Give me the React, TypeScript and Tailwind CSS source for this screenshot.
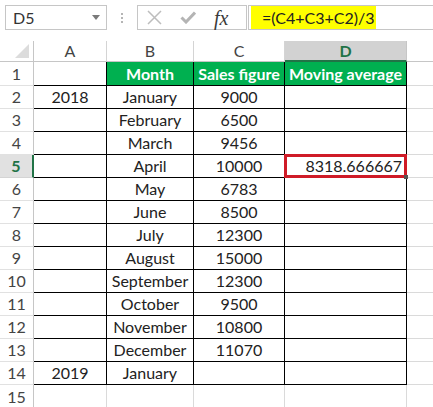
import React from "react";

const rows: string[][] = [
  ["", "Month", "Sales figure", "Moving average"],
  ["2018", "January", "9000", ""],
  ["", "February", "6500", ""],
  ["", "March", "9456", ""],
  ["", "April", "10000", "8318.666667"],
  ["", "May", "6783", ""],
  ["", "June", "8500", ""],
  ["", "July", "12300", ""],
  ["", "August", "15000", ""],
  ["", "September", "12300", ""],
  ["", "October", "9500", ""],
  ["", "November", "10800", ""],
  ["", "December", "11070", ""],
  ["2019", "January", "", ""],
];

function Toolbar() {
  return (
    <div className="flex h-[41px] items-start pt-[5px] pl-[5px]">
      {/* Name box */}
      <div className="flex h-[25px] w-[102px] items-center justify-between border border-[#c6c6c6] pl-[7px] pr-[6px] text-[16px] text-[#333]">
        <span>D5</span>
        <svg width="8" height="5" viewBox="0 0 8 5">
          <polygon points="0,0 8,0 4,5" fill="#7a7a7a" />
        </svg>
      </div>
      <div className="flex h-[25px] w-[30px] flex-col items-center justify-center gap-[2px]">
        <span className="h-[2px] w-[2px] bg-[#b5b5b5]" />
        <span className="h-[2px] w-[2px] bg-[#b5b5b5]" />
        <span className="h-[2px] w-[2px] bg-[#b5b5b5]" />
      </div>
      {/* Cancel / enter / fx */}
      <div className="flex h-[25px] w-[110px] items-center border border-[#c6c6c6] pl-[8px]">
        <svg width="15" height="15" viewBox="0 0 15 15" className="ml-[1px]">
          <path d="M1 1 L14 14 M14 1 L1 14" stroke="#bdbdbd" strokeWidth="1.5" />
        </svg>
        <svg width="16" height="13" viewBox="0 0 16 13" className="ml-[18px]">
          <path d="M1.5 6.5 L6 11 L15 1.5" stroke="#b4b4b4" strokeWidth="3" fill="none" />
        </svg>
        <span className="ml-[18px] font-['Liberation_Serif',serif] text-[20px] italic text-[#3a3a3a]">
          fx
        </span>
      </div>
      {/* Formula input */}
      <div className="ml-[1px] flex h-[25px] flex-1 items-stretch border-y border-l border-[#c6c6c6] pl-[2px]">
        <div className="flex w-[125px] items-center bg-[#ffff00] pl-[11px] text-[16px] text-[#222]">
          =(C4+C3+C2)/3
        </div>
      </div>
    </div>
  );
}

function Corner() {
  return (
    <div className="flex items-end justify-end border-r border-b border-[#c6c6c6] pr-[4px] pb-[3px]">
      <svg width="14" height="14" viewBox="0 0 14 14">
        <polygon points="14,0 14,14 0,14" fill="#dcdcdc" />
      </svg>
    </div>
  );
}

export default function App() {
  const letters = ["A", "B", "C", "D"];
  return (
    <div className="relative h-[407px] w-[433px] overflow-hidden bg-white font-['Lato',sans-serif]">
      <Toolbar />
      <div className="grid grid-cols-[34px_73px_87px_91px_122px_26px] grid-rows-[21px_24px_repeat(14,23px)] text-[16px] text-[#222]">
        <Corner />
        {letters.map((l) =>
          l === "D" ? (
            <div
              key={l}
              className="flex items-center justify-center border-r border-b-2 border-r-[#c6c6c6] border-b-[#217346] bg-[#d2d2d2] font-bold text-[#217346]"
            >
              {l}
            </div>
          ) : (
            <div
              key={l}
              className="flex items-center justify-center border-r border-b border-[#d4d4d4] border-b-[#c6c6c6] text-[#444]"
            >
              {l}
            </div>
          ),
        )}
        <div className="border-b border-[#c6c6c6]" />

        {rows.map((r, i) => {
          const n = i + 1;
          return (
            <React.Fragment key={n}>
              {n === 5 ? (
                <div className="flex items-center justify-center border-r-2 border-b border-r-[#217346] border-b-[#d4d4d4] bg-[#e1e1e1] font-bold text-[#217346]">
                  {n}
                </div>
              ) : (
                <div className="flex items-center justify-center border-r border-b border-r-[#c6c6c6] border-b-[#e1e1e1] text-[#444]">
                  {n}
                </div>
              )}
              {r.map((v, j) => {
                const header = n === 1 && j > 0;
                const sel = n === 5 && j === 3;
                return (
                  <div
                    key={j}
                    className={
                      header
                        ? "flex items-center justify-center whitespace-nowrap border-r border-b border-black bg-[#00b050] font-bold text-white"
                        : sel
                          ? "relative flex items-center justify-end border-r border-b border-black pr-[4px]"
                          : "flex items-center justify-center border-r border-b border-black"
                    }
                  >
                    {v}
                    {sel && (
                      <div className="absolute -top-[1px] -left-[1px] -right-[1px] -bottom-[1px] border-[3px] border-[#cf1b27]">
                        <span className="absolute -right-[4px] -bottom-[4px] h-[4px] w-[4px] bg-[#555]" />
                      </div>
                    )}
                  </div>
                );
              })}
              <div className="border-b border-[#dadada]" />
            </React.Fragment>
          );
        })}

        <div className="flex items-center justify-center border-r border-r-[#c6c6c6] text-[#444]">
          15
        </div>
        <div className="border-r border-[#dadada]" />
        <div className="border-r border-[#dadada]" />
        <div className="border-r border-[#dadada]" />
        <div className="border-r border-[#dadada]" />
        <div />
      </div>
    </div>
  );
}
